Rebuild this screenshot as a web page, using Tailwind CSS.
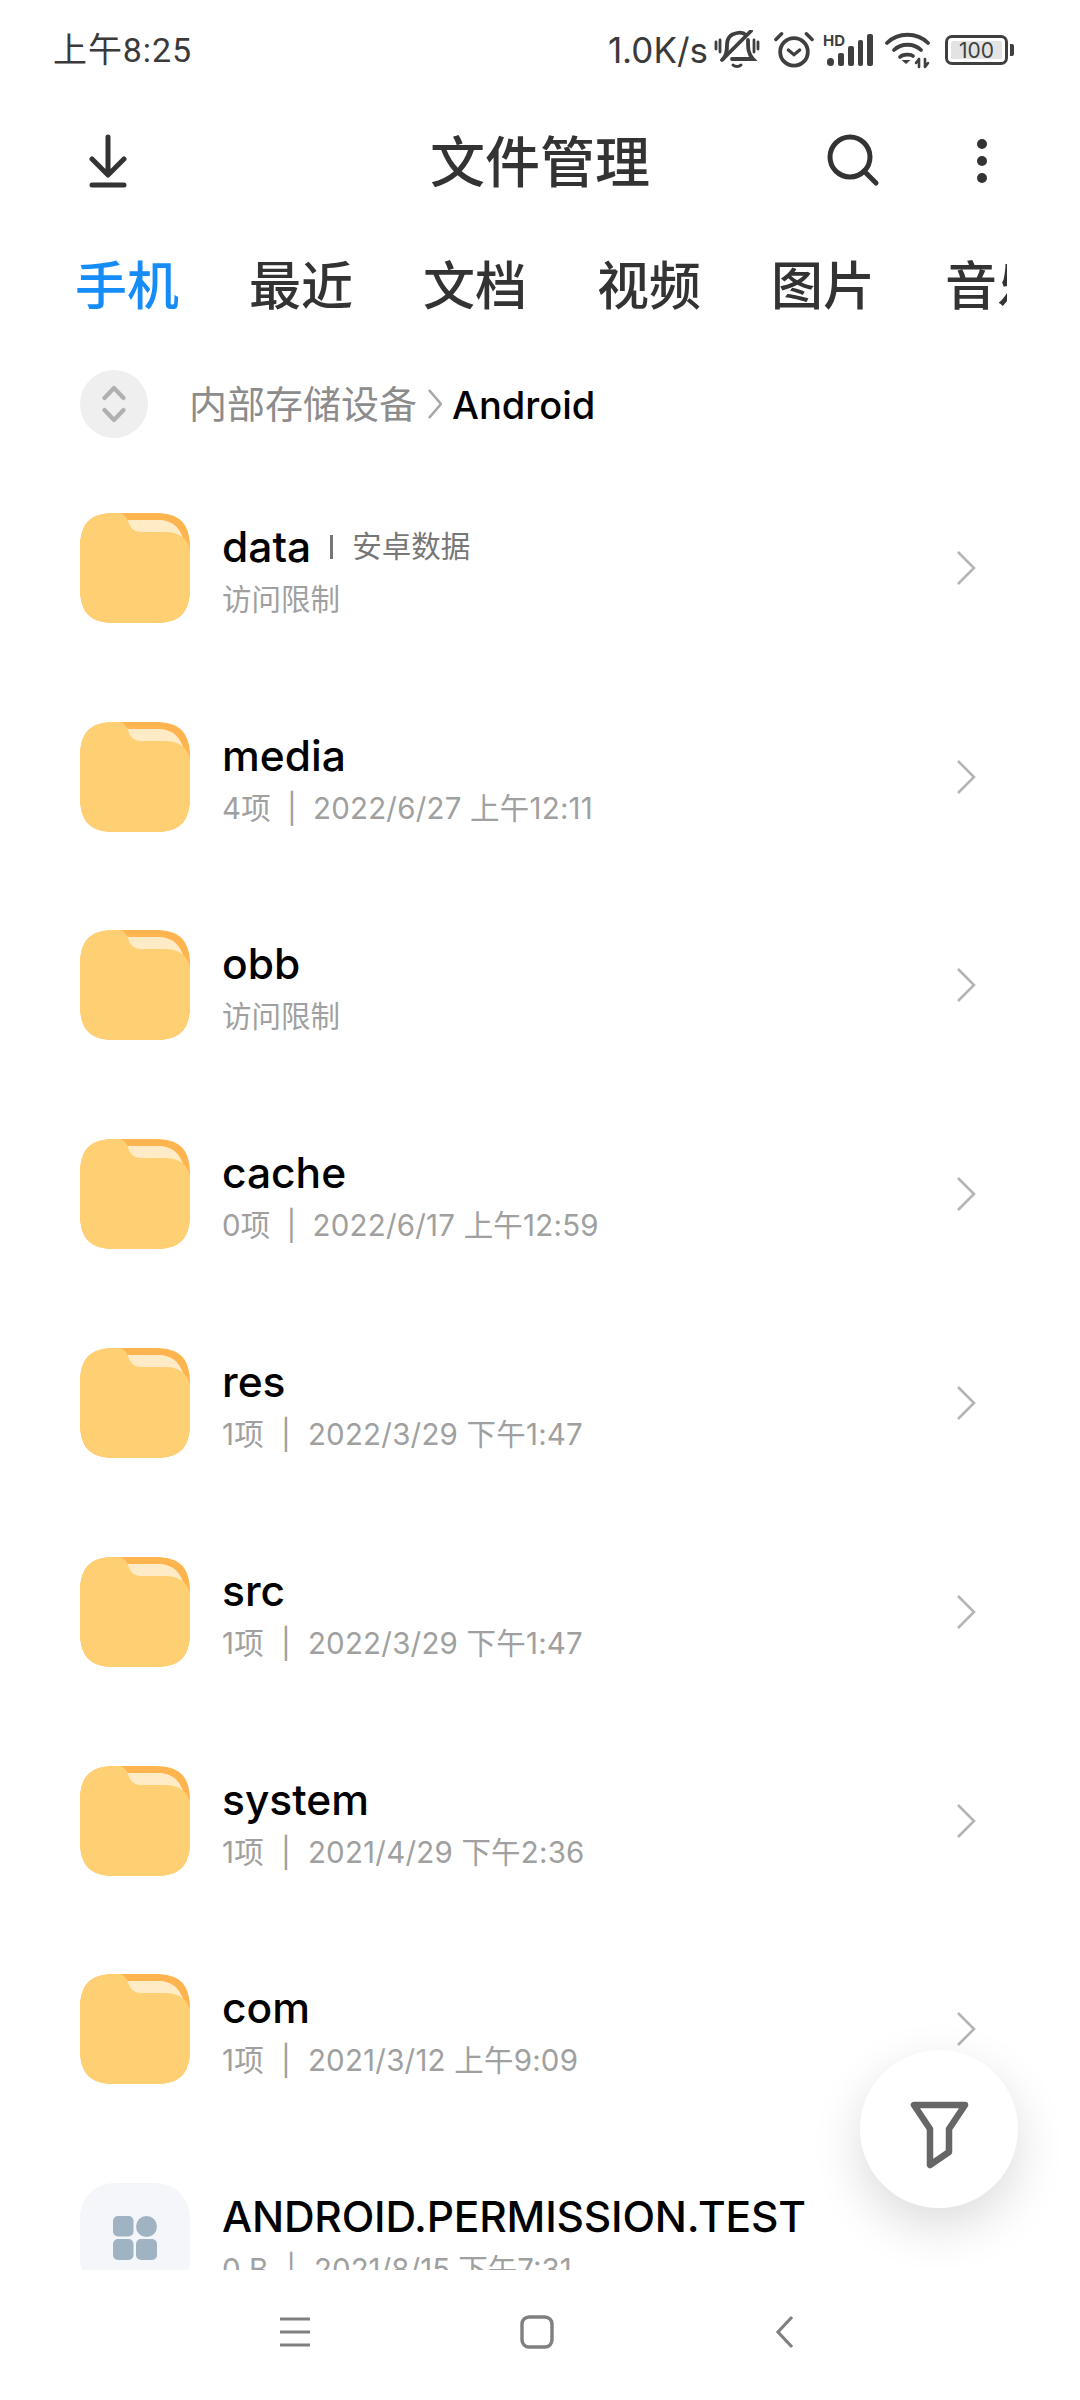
<!doctype html>
<html lang="zh"><head><meta charset="utf-8"><script src="https://cdn.jsdelivr.net/npm/@tailwindcss/browser@4"></script></head>
<body class="bg-white">
<svg width="0" height="0" class="absolute"><defs>
<symbol id="folder" viewBox="0 0 110 110">
<path fill="#FFB54F" d="M0 36C0 10 10 0 36 0H74C100 0 110 10 110 36V74C110 100 100 110 74 110H36C10 110 0 100 0 74Z"/>
<path fill="#FFEBC6" d="M44 7H78C92 7 101 14 105 32L60 32Z"/>
<path fill="#FFCF73" d="M0 36C0 10 10 0 36 0H38C43 0 46 3 48 8C50 15 54 19 61 19H84C97 19 106 23 110 36V74C110 100 100 110 74 110H36C10 110 0 100 0 74Z"/>
</symbol>
<symbol id="chev" viewBox="0 0 20 36"><path d="M2 2L18 18L2 34" fill="none" stroke="#b5b5b5" stroke-width="2.6"/></symbol>
</defs></svg>
<div class="relative w-[1080px] h-[2400px] overflow-hidden flex flex-col bg-white text-[#000] font-['Inter','Noto_Sans_CJK_SC',sans-serif]">
  <!-- status bar -->
  <div class="h-[100px] shrink-0 flex items-center justify-between pl-[53px] pr-[66px] text-[#3a3a3a] text-[34px]">
    <span class="font-['Roboto','Noto_Sans_CJK_SC',sans-serif] tracking-[0.9px]">上午8:25</span>
    <div class="flex items-center">
      <span class="font-['Inter','Noto_Sans_CJK_SC',sans-serif] text-[35px] mr-[6px]">1.0K/s</span>
      <svg width="46" height="40" viewBox="0 0 44 40" fill="none" stroke="#3f3f3f" stroke-width="3.800" stroke-linecap="round">
        <path d="M8 29C12 25 12 20 12 15C12 8 16 4 22 3C26 2 29 3 31 5M33 10C33 18 33 24 38 29H17"/>
        <path d="M7 30L36 1"/>
        <path d="M18 35C20 37 24 37 26 35" stroke-width="3"/>
        <path d="M1 12V19M5 10V22M39 10V22M43 12V19" stroke-width="2.800"/>
      </svg>
      <svg class="ml-[14px]" width="40" height="40" viewBox="0 0 42 40" fill="none" stroke="#3f3f3f" stroke-width="4" stroke-linecap="round">
        <circle cx="21" cy="22" r="14.5"/>
        <path d="M15 20L21 25L27 20" stroke-width="3.400"/>
        <path d="M2 9L8 3M40 9L34 3" stroke-width="3.600"/>
      </svg>
      <svg class="ml-[9px]" width="52" height="36" viewBox="0 0 52 36">
        <text x="0" y="14" font-family="Inter" font-weight="700" font-size="15" fill="#3f3f3f">HD</text>
        <g fill="#3f3f3f"><rect x="4" y="26" width="7" height="8" rx="3.5"/><rect x="15" y="21" width="6" height="13" rx="2"/><rect x="25" y="14" width="6" height="20" rx="2"/><rect x="35" y="8" width="5" height="26" rx="2"/><rect x="44" y="2" width="6" height="32" rx="2"/></g>
      </svg>
      <svg class="ml-[10px]" width="46" height="38" viewBox="0 0 46 38" fill="none" stroke="#3f3f3f" stroke-width="3.800" stroke-linecap="round">
        <path d="M2 12C13 1 32 1 43 12"/>
        <path d="M9 19C16 12 29 12 36 19"/>
        <path d="M15 26C18 23 26 23 28 25"/>
        <path d="M21 33L16.500 29H25.500Z" fill="#3f3f3f" stroke="none"/>
        <path d="M34 28V36M40 28V36M31 32L34 28M43 32L40 36" stroke-width="2.600"/>
      </svg>
      <div class="ml-[14px] flex items-center">
        <div class="w-[63px] h-[30px] border-[3.5px] border-[#3f3f3f] rounded-[7px] p-[3px] flex">
          <div class="flex-1 bg-[#e3e3e3] rounded-[2px] flex items-center justify-center text-[21px] leading-none text-[#3f3f3f] font-['Inter',sans-serif]">100</div>
        </div>
        <div class="w-[4px] h-[12px] bg-[#3f3f3f] rounded-r-[2px] ml-[2px]"></div>
      </div>
    </div>
  </div>
  <!-- header -->
  <div class="h-[122px] shrink-0 relative flex items-center justify-center text-[#333] text-[55px] font-medium leading-none pt-[2px]">
    <svg class="absolute left-[89px] top-[34px]" width="38" height="56" viewBox="0 0 38 56" fill="none" stroke="#333" stroke-width="5" stroke-linecap="round" stroke-linejoin="round"><path d="M19 3V40M3 25L19 41L35 25M3 51H35"/></svg>
    <span>文件管理</span>
    <svg class="absolute left-[826px] top-[33px]" width="54" height="54" viewBox="0 0 54 54" fill="none" stroke="#333" stroke-width="5" stroke-linecap="round"><circle cx="24" cy="24" r="20"/><path d="M38 38L50 50"/></svg>
    <svg class="absolute left-[971px] top-[39px]" width="22" height="46" viewBox="0 0 22 46" fill="#333"><circle cx="11" cy="5" r="5"/><circle cx="11" cy="22" r="5"/><circle cx="11" cy="39" r="5"/></svg>
  </div>
  <!-- tabs -->
  <div class="h-[128px] shrink-0 ml-[75px] w-[932px] overflow-hidden flex items-center gap-[70px] text-[52px] leading-none font-medium text-[#333] whitespace-nowrap pt-[2px]">
    <span class="text-[#158CF8] shrink-0">手机</span><span class="shrink-0">最近</span><span class="shrink-0">文档</span><span class="shrink-0">视频</span><span class="shrink-0">图片</span><span class="shrink-0">音乐</span>
  </div>
  <!-- breadcrumb -->
  <div class="h-[108px] shrink-0 pl-[80px] flex items-center">
    <div class="w-[68px] h-[68px] rounded-full bg-[#efefef] flex items-center justify-center">
      <svg width="24" height="38" viewBox="0 0 24 38" fill="none" stroke="#b0b0b0" stroke-width="4.200" stroke-linecap="round" stroke-linejoin="round"><path d="M2.500 13L12 3L21.500 13M2.500 25L12 35L21.500 25"/></svg>
    </div>
    <span class="ml-[41px] text-[38px] text-[#8c8c8c]">内部存储设备</span>
    <svg class="ml-[11px]" width="14" height="30" viewBox="0 0 14 30" fill="none" stroke="#a8a8a8" stroke-width="2.600"><path d="M1 1L13 15L1 29"/></svg>
    <span class="ml-[10px] pt-[2px] text-[38px] text-black font-[450]">Android</span>
  </div>
  <!-- list -->
  <div class="flex-1 min-h-0 overflow-hidden pt-[5.5px]">
    <div class="h-[208.8px] pl-[80px] flex items-center">
      <svg class="w-[110px] h-[110px] shrink-0"><use href="#folder"/></svg>
      <div class="ml-[32px] pt-[2px] flex-1 flex flex-col">
        <div class="flex items-center text-[42.5px] font-[450] h-[52px] leading-none">data<span class="w-[3px] h-[24px] bg-[#777] mx-[19px]"></span><span class="text-[29.5px] font-normal text-[#777]">安卓数据</span></div>
        <div class="mt-[8px] text-[29.5px] leading-[36px] text-[#a0a0a0]">访问限制</div>
      </div>
      <svg class="w-[20px] h-[36px] mr-[104px] shrink-0"><use href="#chev"/></svg>
    </div>
    <div class="h-[208.8px] pl-[80px] flex items-center">
      <svg class="w-[110px] h-[110px] shrink-0"><use href="#folder"/></svg>
      <div class="ml-[32px] pt-[2px] flex-1 flex flex-col">
        <div class="text-[42.5px] font-[450] h-[52px] leading-[52px]">media</div>
        <div class="mt-[8px] text-[29.5px] leading-[36px] text-[#a0a0a0] tracking-[0.2px]">4项<span class="mx-[16px]">|</span>2022/6/27 上午12:11</div>
      </div>
      <svg class="w-[20px] h-[36px] mr-[104px] shrink-0"><use href="#chev"/></svg>
    </div>
    <div class="h-[208.8px] pl-[80px] flex items-center">
      <svg class="w-[110px] h-[110px] shrink-0"><use href="#folder"/></svg>
      <div class="ml-[32px] pt-[2px] flex-1 flex flex-col">
        <div class="text-[42.5px] font-[450] h-[52px] leading-[52px]">obb</div>
        <div class="mt-[8px] text-[29.5px] leading-[36px] text-[#a0a0a0]">访问限制</div>
      </div>
      <svg class="w-[20px] h-[36px] mr-[104px] shrink-0"><use href="#chev"/></svg>
    </div>
    <div class="h-[208.8px] pl-[80px] flex items-center">
      <svg class="w-[110px] h-[110px] shrink-0"><use href="#folder"/></svg>
      <div class="ml-[32px] pt-[2px] flex-1 flex flex-col">
        <div class="text-[42.5px] font-[450] h-[52px] leading-[52px]">cache</div>
        <div class="mt-[8px] text-[29.5px] leading-[36px] text-[#a0a0a0] tracking-[0.2px]">0项<span class="mx-[16px]">|</span>2022/6/17 上午12:59</div>
      </div>
      <svg class="w-[20px] h-[36px] mr-[104px] shrink-0"><use href="#chev"/></svg>
    </div>
    <div class="h-[208.8px] pl-[80px] flex items-center">
      <svg class="w-[110px] h-[110px] shrink-0"><use href="#folder"/></svg>
      <div class="ml-[32px] pt-[2px] flex-1 flex flex-col">
        <div class="text-[42.5px] font-[450] h-[52px] leading-[52px]">res</div>
        <div class="mt-[8px] text-[29.5px] leading-[36px] text-[#a0a0a0] tracking-[0.2px]">1项<span class="mx-[17px]">|</span>2022/3/29 下午1:47</div>
      </div>
      <svg class="w-[20px] h-[36px] mr-[104px] shrink-0"><use href="#chev"/></svg>
    </div>
    <div class="h-[208.8px] pl-[80px] flex items-center">
      <svg class="w-[110px] h-[110px] shrink-0"><use href="#folder"/></svg>
      <div class="ml-[32px] pt-[2px] flex-1 flex flex-col">
        <div class="text-[42.5px] font-[450] h-[52px] leading-[52px]">src</div>
        <div class="mt-[8px] text-[29.5px] leading-[36px] text-[#a0a0a0] tracking-[0.2px]">1项<span class="mx-[17px]">|</span>2022/3/29 下午1:47</div>
      </div>
      <svg class="w-[20px] h-[36px] mr-[104px] shrink-0"><use href="#chev"/></svg>
    </div>
    <div class="h-[208.8px] pl-[80px] flex items-center">
      <svg class="w-[110px] h-[110px] shrink-0"><use href="#folder"/></svg>
      <div class="ml-[32px] pt-[2px] flex-1 flex flex-col">
        <div class="text-[42.5px] font-[450] h-[52px] leading-[52px]">system</div>
        <div class="mt-[8px] text-[29.5px] leading-[36px] text-[#a0a0a0] tracking-[0.2px]">1项<span class="mx-[17px]">|</span>2021/4/29 下午2:36</div>
      </div>
      <svg class="w-[20px] h-[36px] mr-[104px] shrink-0"><use href="#chev"/></svg>
    </div>
    <div class="h-[208.8px] pl-[80px] flex items-center">
      <svg class="w-[110px] h-[110px] shrink-0"><use href="#folder"/></svg>
      <div class="ml-[32px] pt-[2px] flex-1 flex flex-col">
        <div class="text-[42.5px] font-[450] h-[52px] leading-[52px]">com</div>
        <div class="mt-[8px] text-[29.5px] leading-[36px] text-[#a0a0a0] tracking-[0.2px]">1项<span class="mx-[17px]">|</span>2021/3/12 上午9:09</div>
      </div>
      <svg class="w-[20px] h-[36px] mr-[104px] shrink-0"><use href="#chev"/></svg>
    </div>
    <div class="h-[208.8px] pl-[80px] flex items-center">
      <div class="w-[110px] h-[110px] shrink-0 bg-[#f4f6f9] rounded-[34px] flex items-center justify-center">
        <svg width="44" height="44" viewBox="0 0 44 44" fill="#9fb3c3"><rect x="0" y="0" width="20.500" height="20.500" rx="5"/><circle cx="33.500" cy="10.500" r="10.500"/><rect x="0" y="23" width="20.500" height="21" rx="5"/><rect x="23" y="23" width="21" height="21" rx="5"/></svg>
      </div>
      <div class="ml-[32px] pt-[2px] flex-1 flex flex-col">
        <div class="text-[42.5px] font-[450] h-[52px] leading-[52px] tracking-[-0.2px]">ANDROID.PERMISSION.TEST</div>
        <div class="mt-[8px] text-[29.5px] leading-[36px] text-[#a0a0a0]">0 B<span class="mx-[18px]">|</span>2021/8/15 下午7:31</div>
      </div>
    </div>
  </div>
  <!-- nav bar -->
  <div class="h-[130px] shrink-0 bg-white relative z-10 flex items-start">
    <svg class="absolute left-[279px] top-[47px]" width="32" height="30" viewBox="0 0 32 30" stroke="#808080" stroke-width="3.200"><path d="M1 2H31M1 15H31M1 28H31"/></svg>
    <svg class="absolute left-[520px] top-[45px]" width="34" height="34" viewBox="0 0 34 34" fill="none" stroke="#808080" stroke-width="3.400"><rect x="2" y="2" width="30" height="30" rx="7"/></svg>
    <svg class="absolute left-[775px] top-[45px]" width="20" height="34" viewBox="0 0 20 34" fill="none" stroke="#808080" stroke-width="3.200"><path d="M17 2L3 17L17 32"/></svg>
  </div>
  <!-- fab -->
  <div class="absolute z-20 left-[860px] top-[2050px] w-[158px] h-[158px] rounded-full bg-white shadow-[0_18px_50px_rgba(0,0,0,0.14)] flex items-center justify-center">
    <svg class="mt-[10px]" width="65" height="72" viewBox="0 0 65 72" fill="none" stroke="#666" stroke-width="6.500" stroke-linejoin="round"><path d="M7 7H58L42 31V54L23 67V31Z"/></svg>
  </div>
</div>
</body></html>
